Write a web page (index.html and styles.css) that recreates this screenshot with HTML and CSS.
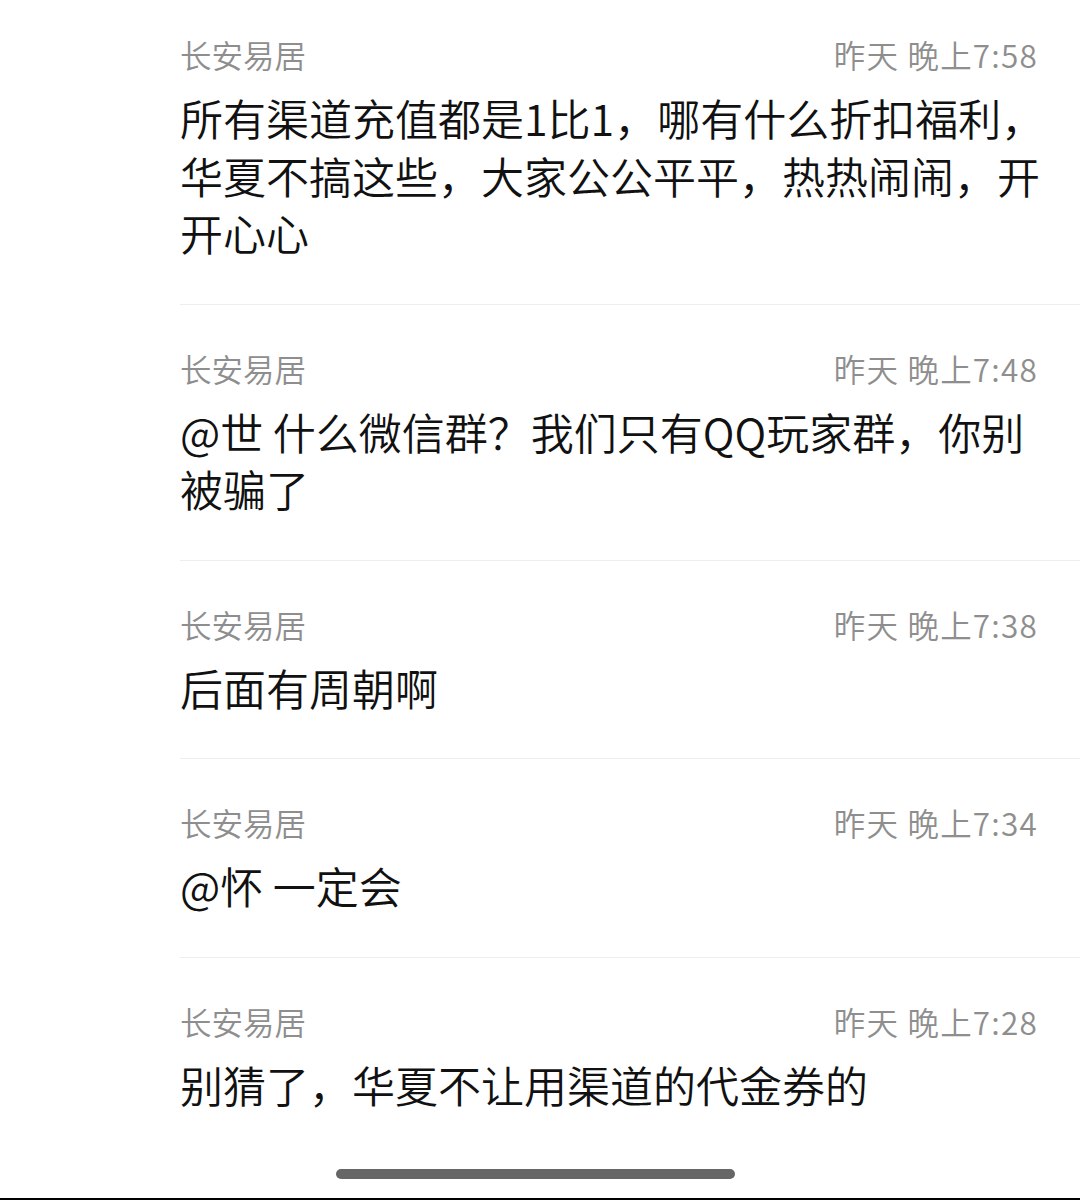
FILE: index.html
```html
<!DOCTYPE html>
<html>
<head>
  <meta charset="utf-8">
  <title>评论</title>
  <link rel="stylesheet" href="styles.css">
</head>
<body>
  <div class="comments">
    <div class="comment">
      <div class="comment-head">
        <span class="name">长安易居</span>
        <span class="time">昨天 晚上7:58</span>
      </div>
      <div class="comment-text">所有渠道充值都是1比1，哪有什么折扣福利，华夏不搞这些，大家公公平平，热热闹闹，开开心心</div>
    </div>
    <div class="comment">
      <div class="comment-head">
        <span class="name">长安易居</span>
        <span class="time">昨天 晚上7:48</span>
      </div>
      <div class="comment-text">@世 什么微信群？我们只有QQ玩家群，你别被骗了</div>
    </div>
    <div class="comment">
      <div class="comment-head">
        <span class="name">长安易居</span>
        <span class="time">昨天 晚上7:38</span>
      </div>
      <div class="comment-text">后面有周朝啊</div>
    </div>
    <div class="comment">
      <div class="comment-head">
        <span class="name">长安易居</span>
        <span class="time">昨天 晚上7:34</span>
      </div>
      <div class="comment-text">@怀 一定会</div>
    </div>
    <div class="comment">
      <div class="comment-head">
        <span class="name">长安易居</span>
        <span class="time">昨天 晚上7:28</span>
      </div>
      <div class="comment-text">别猜了，华夏不让用渠道的代金券的</div>
    </div>
  </div>
  <div class="home-bar"></div>
</body>
</html>
```

FILE: styles.css
```css
html, body {
  margin: 0;
  padding: 0;
}

body {
  width: 1080px;
  height: 1200px;
  overflow: hidden;
  position: relative;
  background-color: #ffffff;
  font-family: "Noto Sans CJK SC", "Noto Sans", sans-serif;
  border-bottom: 2px solid #000;
  box-sizing: border-box;
}

.comments {
  margin-left: 180px;
}

.comment {
  padding: 45px 30px 42px 0;
  border-top: 1px solid #eeeeee;
}

.comment:first-child {
  padding-top: 36px;
  border-top: none;
}

.comment-head {
  display: flex;
  justify-content: space-between;
  align-items: center;
  height: 36px;
  font-size: 31.5px;
  line-height: 36px;
  font-weight: 350;
  color: #8e8e8e;
}

.time {
  margin-right: 12px;
  letter-spacing: 1.2px;
}

.comment-text {
  margin-top: 17px;
  font-size: 43px;
  line-height: 57.5px;
  font-weight: 350;
  color: #111111;
}

.home-bar {
  position: absolute;
  left: 336px;
  top: 1169px;
  width: 399px;
  height: 10px;
  border-radius: 5px;
  background-color: #666666;
}
```
